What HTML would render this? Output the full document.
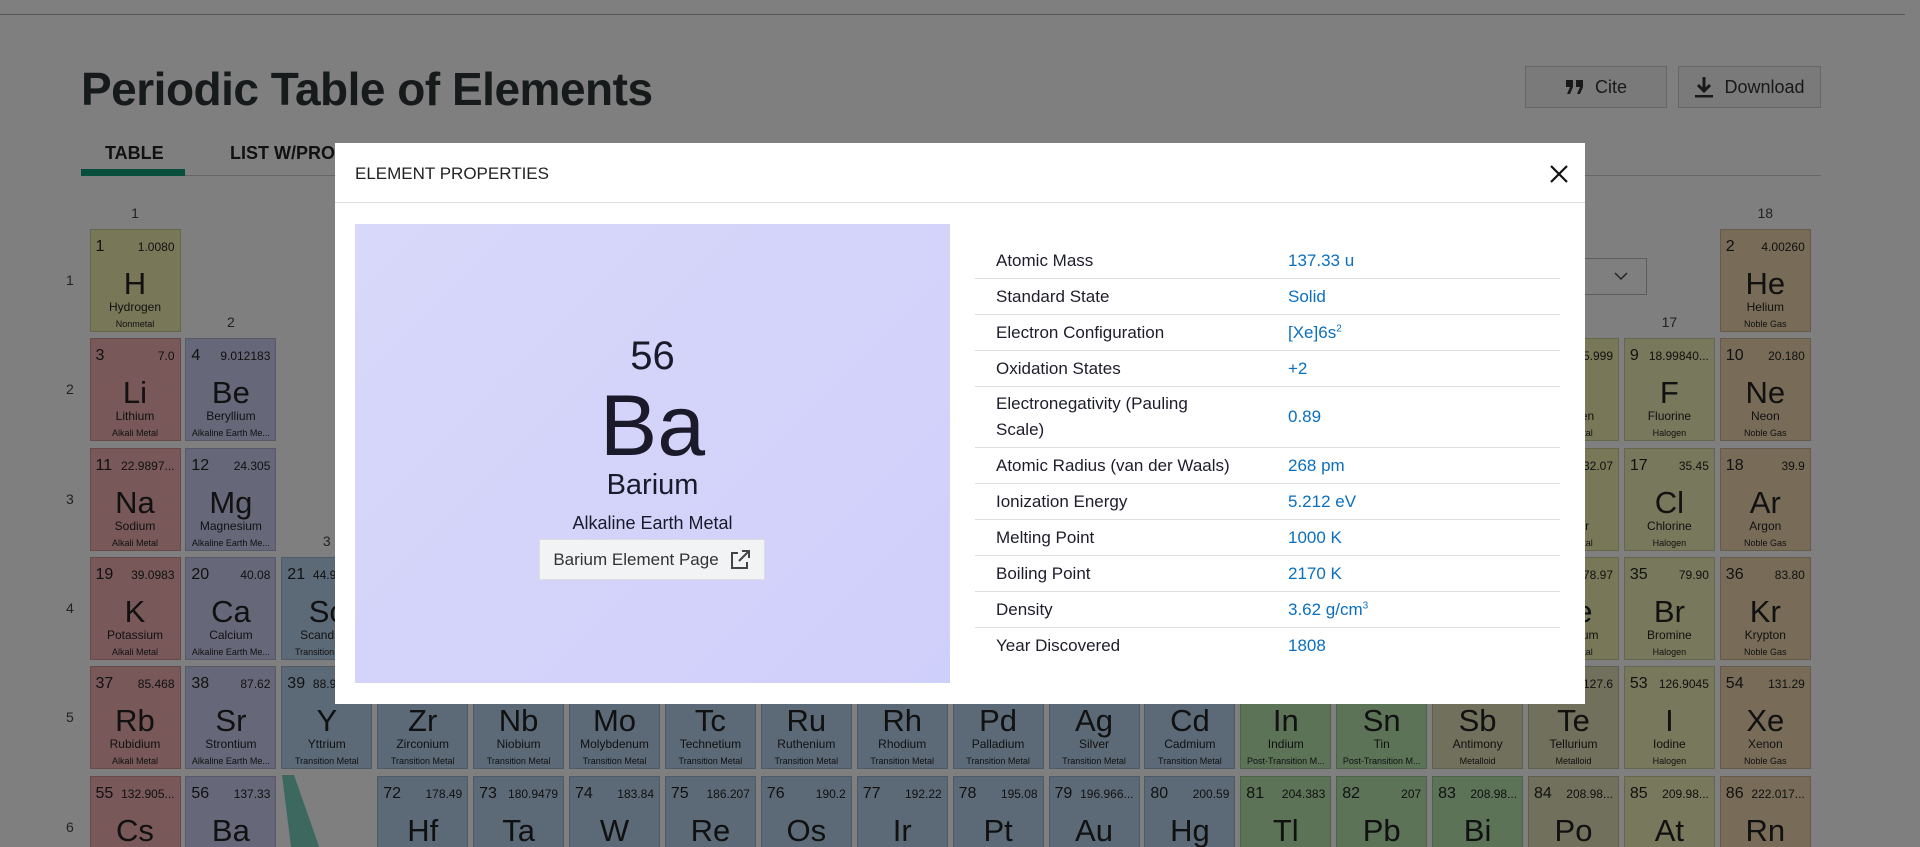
<!DOCTYPE html>
<html><head><meta charset="utf-8">
<style>
*{box-sizing:border-box;margin:0;padding:0}
html,body{width:1920px;height:847px;overflow:hidden;background:#fff;font-family:"Liberation Sans",sans-serif;color:#222}
#wrap{position:relative;width:1920px;height:847px;overflow:hidden}
.topline{position:absolute;left:0;top:14px;width:1905px;height:1px;background:#aaa}
h1{position:absolute;left:81px;top:62px;font-size:46px;font-weight:700;color:#2d3436;letter-spacing:-0.5px}
.btn{position:absolute;top:66px;height:42px;border:1px solid #ccc;background:#f4f4f4;font-size:18px;color:#333;display:flex;align-items:center;justify-content:center;gap:10px}
.tab{position:absolute;top:143px;font-size:18px;font-weight:700;color:#222}
.tabline{position:absolute;left:81px;top:175px;width:1740px;height:1px;background:#ccc}
.tabsel{position:absolute;left:81px;top:169px;width:104px;height:7px;background:#0f9d78}
.gl{position:absolute;font-size:14px;color:#444;width:91px;text-align:center}
.pl{position:absolute;left:66px;font-size:14px;color:#444}
.t{position:absolute;width:91px;height:103px;border:1px solid rgba(0,0,0,.15)}
.t .n{position:absolute;left:5px;top:8px;font-size:16px}
.t .m{position:absolute;right:5px;top:10px;font-size:12px}
.t .s{position:absolute;left:0;right:0;top:36px;text-align:center;font-size:31px}
.t .nm{position:absolute;left:0;right:0;top:70px;text-align:center;font-size:12px;white-space:nowrap}
.t .c{position:absolute;left:0;right:0;top:89px;text-align:center;font-size:9px;white-space:nowrap;overflow:hidden}
.overlay{position:absolute;left:0;top:0;width:1920px;height:847px;background:rgba(0,0,0,.5)}
.modal{position:absolute;left:335px;top:143px;width:1250px;height:561px;background:#fff}
.mh{position:absolute;left:0;top:0;width:1250px;height:60px;border-bottom:1px solid #ddd}
.mh .tt{position:absolute;left:20px;top:21px;font-size:17px;color:#222}
.panel{position:absolute;left:20px;top:81px;width:595px;height:459px;background:linear-gradient(135deg,#d8d8fa,#cfcffb)}
.tbl{position:absolute;left:640px;top:100px;width:585px}
.row{display:flex;border-bottom:1px solid #ddd;height:36px;align-items:center;font-size:17px}
.row .k{width:313px;padding-left:21px;color:#1d1d2b}
.row .v{color:#0b6fbf}
sup{font-size:10px}
</style></head><body><div id="wrap">
<div class="topline"></div>
<h1>Periodic Table of Elements</h1>
<div class="btn" style="left:1525px;width:142px"><svg width="20" height="16" viewBox="0 0 20 16"><path d="M1 1h7v7l-3 7H2l3-7H1zM11 1h7v7l-3 7h-3l3-7h-4z" fill="#333"/></svg>Cite</div>
<div class="btn" style="left:1678px;width:143px"><svg width="20" height="22" viewBox="0 0 20 22"><path d="M10 1v13M4 9l6 6 6-6" stroke="#333" stroke-width="3" fill="none"/><rect x="1" y="19" width="18" height="2.5" fill="#333"/></svg>Download</div>
<div class="tab" style="left:105px">TABLE</div>
<div class="tab" style="left:230px">LIST W/PROPERTIES</div>
<div class="tabline"></div><div class="tabsel"></div>
<div style="position:absolute;left:1480px;top:258px;width:167px;height:37px;border:1px solid #bbb;background:#fff"><svg style="position:absolute;right:18px;top:12px" width="14" height="10"><path d="M1 2l6 6 6-6" stroke="#444" stroke-width="1.5" fill="none"/></svg></div>
<div id="pt"></div>
<svg style="position:absolute;left:282px;top:775px" width="60" height="80"><polygon points="0,0 12,0 40,80 10,80" fill="#7ad0c0"/></svg>
<div class="overlay"></div>
<div class="modal">
 <div class="mh"><div class="tt">ELEMENT PROPERTIES</div>
 <svg style="position:absolute;left:1215px;top:22px" width="18" height="18"><path d="M1 1L17 17M17 1L1 17" stroke="#111" stroke-width="2.2"/></svg></div>
 <div class="panel">
  <div style="position:absolute;left:0;right:0;top:110px;text-align:center;font-size:40px;color:#1a1a2a">56</div>
  <div style="position:absolute;left:0;right:0;top:159px;text-align:center;font-size:86px;color:#1a1a2a;line-height:1">Ba</div>
  <div style="position:absolute;left:0;right:0;top:245px;text-align:center;font-size:29px;color:#1a1a2a">Barium</div>
  <div style="position:absolute;left:0;right:0;top:289px;text-align:center;font-size:18px;color:#1a1a2a">Alkaline Earth Metal</div>
  <div style="position:absolute;left:184px;top:315px;width:226px;height:41px;background:#f2f3f5;border:1px solid #ddd;display:flex;align-items:center;justify-content:center;gap:10px;font-size:17px;color:#333">Barium Element Page<svg width="22" height="22" viewBox="0 0 22 22"><path d="M9 4H3v15h15v-6M13 2h7v7M20 2L10 12" stroke="#444" stroke-width="2" fill="none"/></svg></div>
 </div>
 <div class="tbl">
  <div class="row"><div class="k">Atomic Mass</div><div class="v">137.33 u</div></div>
  <div class="row"><div class="k">Standard State</div><div class="v">Solid</div></div>
  <div class="row"><div class="k">Electron Configuration</div><div class="v">[Xe]6s<sup>2</sup></div></div>
  <div class="row"><div class="k">Oxidation States</div><div class="v">+2</div></div>
  <div class="row" style="height:61px;line-height:26px"><div class="k">Electronegativity (Pauling<br>Scale)</div><div class="v">0.89</div></div>
  <div class="row"><div class="k">Atomic Radius (van der Waals)</div><div class="v">268 pm</div></div>
  <div class="row"><div class="k">Ionization Energy</div><div class="v">5.212 eV</div></div>
  <div class="row"><div class="k">Melting Point</div><div class="v">1000 K</div></div>
  <div class="row"><div class="k">Boiling Point</div><div class="v">2170 K</div></div>
  <div class="row"><div class="k">Density</div><div class="v">3.62 g/cm<sup>3</sup></div></div>
  <div class="row" style="border:none"><div class="k">Year Discovered</div><div class="v">1808</div></div>
 </div>
</div>
</div>
<script>
var C={nm:"#f0f0b0",am:"#f0b0b0",ae:"#cfcff5",tm:"#b8d4f0",pt:"#b8e6b0",md:"#e0e0b8",ha:"#f0f0b8",ng:"#f0d8b0"};
var CN={nm:"Nonmetal",am:"Alkali Metal",ae:"Alkaline Earth Me...",tm:"Transition Metal",pt:"Post-Transition M...",md:"Metalloid",ha:"Halogen",ng:"Noble Gas"};
var D=[
[1,1,1,"H","Hydrogen","1.0080","nm"],[1,18,2,"He","Helium","4.00260","ng"],
[2,1,3,"Li","Lithium","7.0","am"],[2,2,4,"Be","Beryllium","9.012183","ae"],[2,13,5,"B","Boron","10.81","md"],[2,14,6,"C","Carbon","12.011","nm"],[2,15,7,"N","Nitrogen","14.007","nm"],[2,16,8,"O","Oxygen","15.999","nm"],[2,17,9,"F","Fluorine","18.99840...","ha"],[2,18,10,"Ne","Neon","20.180","ng"],
[3,1,11,"Na","Sodium","22.9897...","am"],[3,2,12,"Mg","Magnesium","24.305","ae"],[3,13,13,"Al","Aluminum","26.9815...","pt"],[3,14,14,"Si","Silicon","28.085","md"],[3,15,15,"P","Phosphorus","30.9737...","nm"],[3,16,16,"S","Sulfur","32.07","nm"],[3,17,17,"Cl","Chlorine","35.45","ha"],[3,18,18,"Ar","Argon","39.9","ng"],
[4,1,19,"K","Potassium","39.0983","am"],[4,2,20,"Ca","Calcium","40.08","ae"],[4,3,21,"Sc","Scandium","44.9559...","tm"],[4,4,22,"Ti","Titanium","47.867","tm"],[4,5,23,"V","Vanadium","50.9415","tm"],[4,6,24,"Cr","Chromium","51.996","tm"],[4,7,25,"Mn","Manganese","54.9380...","tm"],[4,8,26,"Fe","Iron","55.84","tm"],[4,9,27,"Co","Cobalt","58.9331...","tm"],[4,10,28,"Ni","Nickel","58.693","tm"],[4,11,29,"Cu","Copper","63.55","tm"],[4,12,30,"Zn","Zinc","65.4","tm"],[4,13,31,"Ga","Gallium","69.723","pt"],[4,14,32,"Ge","Germanium","72.63","md"],[4,15,33,"As","Arsenic","74.9215...","md"],[4,16,34,"Se","Selenium","78.97","nm"],[4,17,35,"Br","Bromine","79.90","ha"],[4,18,36,"Kr","Krypton","83.80","ng"],
[5,1,37,"Rb","Rubidium","85.468","am"],[5,2,38,"Sr","Strontium","87.62","ae"],[5,3,39,"Y","Yttrium","88.9058...","tm"],[5,4,40,"Zr","Zirconium","91.22","tm"],[5,5,41,"Nb","Niobium","92.9063...","tm"],[5,6,42,"Mo","Molybdenum","95.95","tm"],[5,7,43,"Tc","Technetium","96.9063...","tm"],[5,8,44,"Ru","Ruthenium","101.1","tm"],[5,9,45,"Rh","Rhodium","102.905...","tm"],[5,10,46,"Pd","Palladium","106.42","tm"],[5,11,47,"Ag","Silver","107.868","tm"],[5,12,48,"Cd","Cadmium","112.41","tm"],[5,13,49,"In","Indium","114.818","pt"],[5,14,50,"Sn","Tin","118.71","pt"],[5,15,51,"Sb","Antimony","121.760","md"],[5,16,52,"Te","Tellurium","127.6","md"],[5,17,53,"I","Iodine","126.9045","ha"],[5,18,54,"Xe","Xenon","131.29","ng"],
[6,1,55,"Cs","Cesium","132.905...","am"],[6,2,56,"Ba","Barium","137.33","ae"],[6,4,72,"Hf","Hafnium","178.49","tm"],[6,5,73,"Ta","Tantalum","180.9479","tm"],[6,6,74,"W","Tungsten","183.84","tm"],[6,7,75,"Re","Rhenium","186.207","tm"],[6,8,76,"Os","Osmium","190.2","tm"],[6,9,77,"Ir","Iridium","192.22","tm"],[6,10,78,"Pt","Platinum","195.08","tm"],[6,11,79,"Au","Gold","196.966...","tm"],[6,12,80,"Hg","Mercury","200.59","tm"],[6,13,81,"Tl","Thallium","204.383","pt"],[6,14,82,"Pb","Lead","207","pt"],[6,15,83,"Bi","Bismuth","208.98...","pt"],[6,16,84,"Po","Polonium","208.98...","md"],[6,17,85,"At","Astatine","209.98...","ha"],[6,18,86,"Rn","Radon","222.017...","ng"]];
var h="";
function X(c){return 89.5+(c-1)*95.9}
function Y(r){return 229+(r-1)*109.3}
D.forEach(function(e){h+='<div class="t" style="left:'+X(e[1])+'px;top:'+Y(e[0])+'px;background:'+C[e[6]]+'"><div class="n">'+e[2]+'</div><div class="m">'+e[5]+'</div><div class="s">'+e[3]+'</div><div class="nm">'+e[4]+'</div><div class="c">'+CN[e[6]]+'</div></div>';});
var G={1:1,2:2,3:4,13:2,14:2,15:2,16:2,17:2,18:1};
for(var c=1;c<=18;c++){var r=G[c]||4;h+='<div class="gl" style="left:'+X(c)+'px;top:'+(Y(r)-24)+'px">'+c+'</div>';}
for(var r=1;r<=6;r++)h+='<div class="pl" style="top:'+(Y(r)+43)+'px">'+r+'</div>';
document.getElementById("pt").innerHTML=h;
</script>
</body></html>
